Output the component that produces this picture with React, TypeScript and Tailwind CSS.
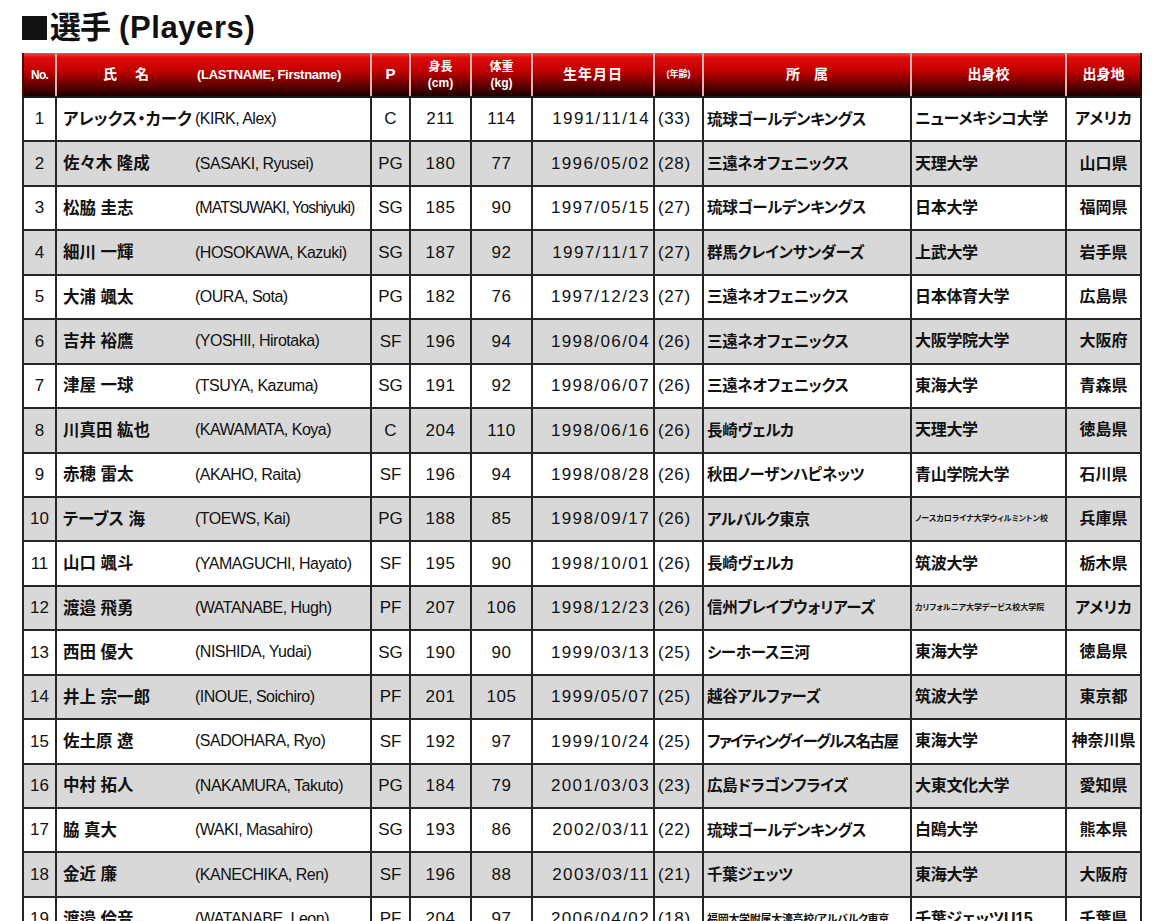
import React from "react";

type P = [number, string, string, string, number, number, string, number, string, string, string];

const players: P[] = [
  [1, "アレックス・カーク", "KIRK, Alex", "C", 211, 114, "1991/11/14", 33, "琉球ゴールデンキングス", "ニューメキシコ大学", "アメリカ"],
  [2, "佐々木 隆成", "SASAKI, Ryusei", "PG", 180, 77, "1996/05/02", 28, "三遠ネオフェニックス", "天理大学", "山口県"],
  [3, "松脇 圭志", "MATSUWAKI, Yoshiyuki", "SG", 185, 90, "1997/05/15", 27, "琉球ゴールデンキングス", "日本大学", "福岡県"],
  [4, "細川 一輝", "HOSOKAWA, Kazuki", "SG", 187, 92, "1997/11/17", 27, "群馬クレインサンダーズ", "上武大学", "岩手県"],
  [5, "大浦 颯太", "OURA, Sota", "PG", 182, 76, "1997/12/23", 27, "三遠ネオフェニックス", "日本体育大学", "広島県"],
  [6, "吉井 裕鷹", "YOSHII, Hirotaka", "SF", 196, 94, "1998/06/04", 26, "三遠ネオフェニックス", "大阪学院大学", "大阪府"],
  [7, "津屋 一球", "TSUYA, Kazuma", "SG", 191, 92, "1998/06/07", 26, "三遠ネオフェニックス", "東海大学", "青森県"],
  [8, "川真田 紘也", "KAWAMATA, Koya", "C", 204, 110, "1998/06/16", 26, "長崎ヴェルカ", "天理大学", "徳島県"],
  [9, "赤穂 雷太", "AKAHO, Raita", "SF", 196, 94, "1998/08/28", 26, "秋田ノーザンハピネッツ", "青山学院大学", "石川県"],
  [10, "テーブス 海", "TOEWS, Kai", "PG", 188, 85, "1998/09/17", 26, "アルバルク東京", "ノースカロライナ大学ウィルミントン校", "兵庫県"],
  [11, "山口 颯斗", "YAMAGUCHI, Hayato", "SF", 195, 90, "1998/10/01", 26, "長崎ヴェルカ", "筑波大学", "栃木県"],
  [12, "渡邉 飛勇", "WATANABE, Hugh", "PF", 207, 106, "1998/12/23", 26, "信州ブレイブウォリアーズ", "カリフォルニア大学デービス校大学院", "アメリカ"],
  [13, "西田 優大", "NISHIDA, Yudai", "SG", 190, 90, "1999/03/13", 25, "シーホース三河", "東海大学", "徳島県"],
  [14, "井上 宗一郎", "INOUE, Soichiro", "PF", 201, 105, "1999/05/07", 25, "越谷アルファーズ", "筑波大学", "東京都"],
  [15, "佐土原 遼", "SADOHARA, Ryo", "SF", 192, 97, "1999/10/24", 25, "ファイティングイーグルス名古屋", "東海大学", "神奈川県"],
  [16, "中村 拓人", "NAKAMURA, Takuto", "PG", 184, 79, "2001/03/03", 23, "広島ドラゴンフライズ", "大東文化大学", "愛知県"],
  [17, "脇 真大", "WAKI, Masahiro", "SG", 193, 86, "2002/03/11", 22, "琉球ゴールデンキングス", "白鴎大学", "熊本県"],
  [18, "金近 廉", "KANECHIKA, Ren", "SF", 196, 88, "2003/03/11", 21, "千葉ジェッツ", "東海大学", "大阪府"],
  [19, "渡邉 伶音", "WATANABE, Leon", "PF", 204, 97, "2006/04/02", 18, "福岡大学附属大濠高校/アルバルク東京", "千葉ジェッツU15", "千葉県"],
];

const th =
  "h-[44px] p-0 align-middle text-white font-bold border-x-2 border-[#e3b3b3] border-b-2 border-b-[#1a1a1a] bg-[linear-gradient(to_bottom,#f24a4a_0%,#e00d0d_10%,#c10000_42%,#6a0000_72%,#1c0000_100%)]";
const td = "p-0 align-middle border-2 border-[#262626] text-[#111] overflow-hidden";
const jpText = "font-bold [font-feature-settings:'palt'] whitespace-nowrap";

function teamClass(team: string) {
  if (team.length > 16) return "text-[11px] tracking-[-0.3px]";
  if (team.length > 12) return "text-[15.5px] tracking-[-1.6px]";
  return "text-[15.5px] tracking-[-0.3px]";
}

export default function App() {
  return (
    <div className="min-h-[921px] w-[1160px] bg-white font-['Liberation_Sans','Noto_Sans_CJK_JP',sans-serif] overflow-hidden">
      <div className="h-[53px] pl-[22px] pt-[10px]">
        <h1 className="flex items-center text-[31px] leading-[36px] font-bold text-[#111]">
          <span className="mr-[3px] inline-block h-[24px] w-[25px] bg-[#111]" />
          <span className="tracking-[-1px]">選手</span>
          <span className="ml-[9px] tracking-[0.6px]">(Players)</span>
        </h1>
      </div>
      <table className="ml-[22px] w-[1118px] table-fixed border-collapse">
        <colgroup>
          <col className="w-[33px]" />
          <col className="w-[315px]" />
          <col className="w-[39px]" />
          <col className="w-[61px]" />
          <col className="w-[61px]" />
          <col className="w-[122px]" />
          <col className="w-[49px]" />
          <col className="w-[208px]" />
          <col className="w-[155px]" />
          <col className="w-[75px]" />
        </colgroup>
        <thead>
          <tr>
            <th className={`${th} border-l-[#5a0000] text-[12px] tracking-[-0.8px]`}>No.</th>
            <th className={th}>
              <div className="flex items-center">
                <span className="w-[140px] shrink-0 text-center text-[14px] tracking-[2px]">氏　名</span>
                <span className="text-[13px] tracking-[-0.3px]">(LASTNAME, Firstname)</span>
              </div>
            </th>
            <th className={`${th} text-[15px]`}>P</th>
            <th className={th}>
              <div className="flex flex-col items-center text-[12px] leading-[16px]">
                <span>身長</span>
                <span>(cm)</span>
              </div>
            </th>
            <th className={th}>
              <div className="flex flex-col items-center text-[12px] leading-[16px]">
                <span>体重</span>
                <span>(kg)</span>
              </div>
            </th>
            <th className={`${th} text-[14px] tracking-[1px]`}>生年月日</th>
            <th className={`${th} text-[9px]`}>(年齢)</th>
            <th className={`${th} text-[14px]`}>所　属</th>
            <th className={`${th} text-[14px]`}>出身校</th>
            <th className={`${th} border-r-[#3a0000] text-[14px]`}>出身地</th>
          </tr>
        </thead>
        <tbody>
          {players.map((p) => {
            const [no, jp, en, pos, h, w, dob, age, team, school, home] = p;
            const bg = no % 2 === 0 ? "bg-[#d8d8d8]" : "bg-white";
            const smallSchool = school.length > 12;
            const longEn = en.length > 17;
            return (
              <tr key={no} className={`h-[44.45px] ${bg}`}>
                <td className={`${td} text-center text-[17px]`}>{no}</td>
                <td className={td}>
                  <div className="flex items-center pl-[6px]">
                    <span className={`w-[132px] shrink-0 text-[16.5px] ${jpText}`}>{jp}</span>
                    <span className={`text-[16px] whitespace-nowrap ${longEn ? "tracking-[-1px]" : "tracking-[-0.5px]"}`}>({en})</span>
                  </div>
                </td>
                <td className={`${td} text-center text-[17px]`}>{pos}</td>
                <td className={`${td} text-center text-[17px] tracking-[0.5px]`}>{h}</td>
                <td className={`${td} text-center text-[17px] tracking-[0.5px]`}>{w}</td>
                <td className={`${td} text-right pr-[3px] text-[17px] tracking-[1.4px]`}>{dob}</td>
                <td className={`${td} pl-[3px] text-[17px] tracking-[0.6px]`}>({age})</td>
                <td className={`${td} pl-[3px] ${jpText} ${teamClass(team)}`}>{team}</td>
                <td className={`${td} pl-[3px] ${jpText} ${smallSchool ? "text-[8px]" : "text-[16px] tracking-[-0.3px]"}`}>
                  {school}
                </td>
                <td className={`${td} text-center text-[16px] ${jpText}`}>{home}</td>
              </tr>
            );
          })}
        </tbody>
      </table>
    </div>
  );
}
